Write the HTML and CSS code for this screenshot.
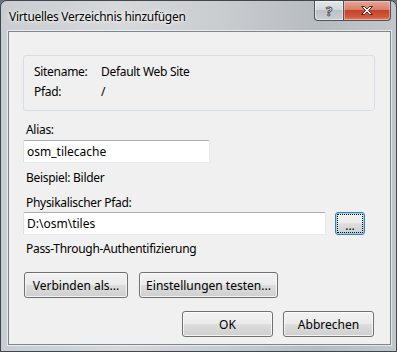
FILE: index.html
```html
<!DOCTYPE html>
<html lang="de">
<head>
  <meta charset="UTF-8">
  <title>Virtuelles Verzeichnis hinzufügen</title>
  <link rel="stylesheet" href="styles.css">
</head>
<body>
  <div class="window">
    <div class="titlebar">
      <span class="title">Virtuelles Verzeichnis hinzufügen</span>
      <div class="caption">
        <span class="cap-help">?</span>
        <span class="cap-close">
          <svg width="14" height="11" viewBox="0 0 14 11">
            <path d="M1.5 1.5h3l2.5 2.6 2.5-2.6h3l-4 4 4 4h-3l-2.5-2.6-2.5 2.6h-3l4-4z" fill="#fff" stroke="#5a2218" stroke-width="1" stroke-linejoin="round"/>
          </svg>
        </span>
      </div>
    </div>

    <div class="client">
      <div class="site-info">
        <div class="info-row"><span class="info-label">Sitename:</span><span>Default Web Site</span></div>
        <div class="info-row"><span class="info-label">Pfad:</span><span>/</span></div>
      </div>

      <label class="field-label alias-label" for="alias">Alias:</label>
      <input type="text" id="alias" class="textbox alias" value="osm_tilecache">
      <p class="hint">Beispiel: Bilder</p>

      <label class="field-label path-label" for="path">Physikalischer Pfad:</label>
      <div class="path-row">
        <input type="text" id="path" class="textbox path" value="D:\osm\tiles">
        <button class="btn browse">...</button>
      </div>
      <p class="auth">Pass-Through-Authentifizierung</p>

      <div class="tool-row">
        <button class="btn connect">Verbinden als...</button>
        <button class="btn test">Einstellungen testen...</button>
      </div>

      <div class="dialog-row">
        <button class="btn ok">OK</button>
        <button class="btn cancel">Abbrechen</button>
      </div>
    </div>
  </div>
</body>
</html>
```

FILE: styles.css
```css
*{
  box-sizing: border-box;
}
body{
  margin: 0;
  font-family: "Noto Sans", "Open Sans", sans-serif;
  font-size: 12px;
  letter-spacing: -0.3px;
  color: #000;
  background: #6b7380;
}
.window{
  width: 397px;
  height: 352px;
  border: 1px solid #3e4650;
  border-radius: 7px 7px 0 0;
  padding: 0 5px 6px 7px;
  background: linear-gradient(90deg, #c9cdd1 0%, #d6d8d9 30%, #cacdd0 55%, #b7bcc1 80%, #c3c6c9 100%);
  display: flex;
  flex-direction: column;
}
.titlebar{
  height: 30px;
  display: flex;
  justify-content: space-between;
  align-items: flex-start;
}
.title{
  padding: 7px 0 0 1px;
  font-size: 12px;
  text-shadow: 0 0 6px #fff, 0 0 3px #fff;
}
.caption{
  display: flex;
  height: 20px;
}
.cap-help, .cap-close{
  display: flex;
  align-items: center;
  justify-content: center;
  border: 1px solid #4d535a;
  border-top: none;
}
.cap-help{
  width: 30px;
  border-radius: 0 0 0 4px;
  background: linear-gradient(#e3e6e9 0%, #d4d8dc 45%, #bcc2c8 50%, #c9ced3 100%);
  color: #fff;
  font-weight: bold;
  font-size: 13px;
  letter-spacing: 0;
  -webkit-text-stroke: 0.8px #3a4048;
  box-shadow: inset 0 0 0 1px rgba(255,255,255,.5);
}
.cap-close{
  width: 47px;
  border-left: none;
  border-radius: 0 0 4px 0;
  background: linear-gradient(#e8a597 0%, #d9806c 45%, #c4432a 50%, #d2593f 85%, #e28a6a 100%);
  box-shadow: inset 0 0 0 1px rgba(255,220,210,.45);
}
.client{
  flex: 1;
  border: 1px solid #7d8690;
  box-shadow: 0 0 0 1px rgba(255,255,255,.6);
  background: #f0f0f0;
  padding: 23px 0 0 14px;
  display: flex;
  flex-direction: column;
  align-items: flex-start;
}
.site-info{
  width: 352px;
  border: 1px solid #d6dfe6;
  border-radius: 3px;
  padding: 6px 10px 8px;
  line-height: 20px;
}
.info-label{
  display: inline-block;
  width: 67px;
}
.field-label, .hint, .auth{
  display: block;
  margin: 0;
  line-height: 16px;
  padding-left: 3px;
}
.alias-label{
  margin-top: 11px;
}
.textbox{
  height: 23px;
  margin: 2px 0 0;
  padding: 0 3px;
  font: inherit;
  color: #000;
  background: #fff;
  border: 1px solid #e3e9ef;
  border-top-color: #abadb3;
  border-left-color: #dbdfe6;
  border-radius: 2px;
  outline: none;
}
.alias{
  width: 187px;
}
.hint{
  margin-top: 7px;
}
.path-label{
  margin-top: 9px;
}
.path-row{
  display: flex;
  align-items: flex-start;
  margin-top: 1px;
}
.path-row .textbox{
  margin: 0;
}
.path{
  width: 303px;
}
.btn{
  height: 26px;
  padding: 0;
  font: inherit;
  color: #000;
  border: 1px solid #707070;
  border-radius: 3px;
  background: linear-gradient(#f2f2f2 0%, #ebebeb 48%, #dddddd 52%, #cfcfcf 100%);
  box-shadow: inset 0 0 0 1px rgba(255,255,255,.75);
}
.browse{
  width: 30px;
  height: 23px;
  margin-left: 9px;
  line-height: 14px;
  padding-top: 4px;
  border-color: #3c7fb1;
  box-shadow: inset 0 0 0 1px #8fd8f6;
  outline: 1px dotted #000;
  outline-offset: -3px;
}
.auth{
  margin-top: 6px;
}
.tool-row{
  display: flex;
  gap: 11px;
  margin-top: 15px;
  margin-left: 1px;
}
.connect{
  width: 104px;
}
.test{
  width: 139px;
}
.dialog-row{
  display: flex;
  gap: 10px;
  margin-top: 13px;
  margin-left: 159px;
}
.ok, .cancel{
  width: 91px;
}
```
